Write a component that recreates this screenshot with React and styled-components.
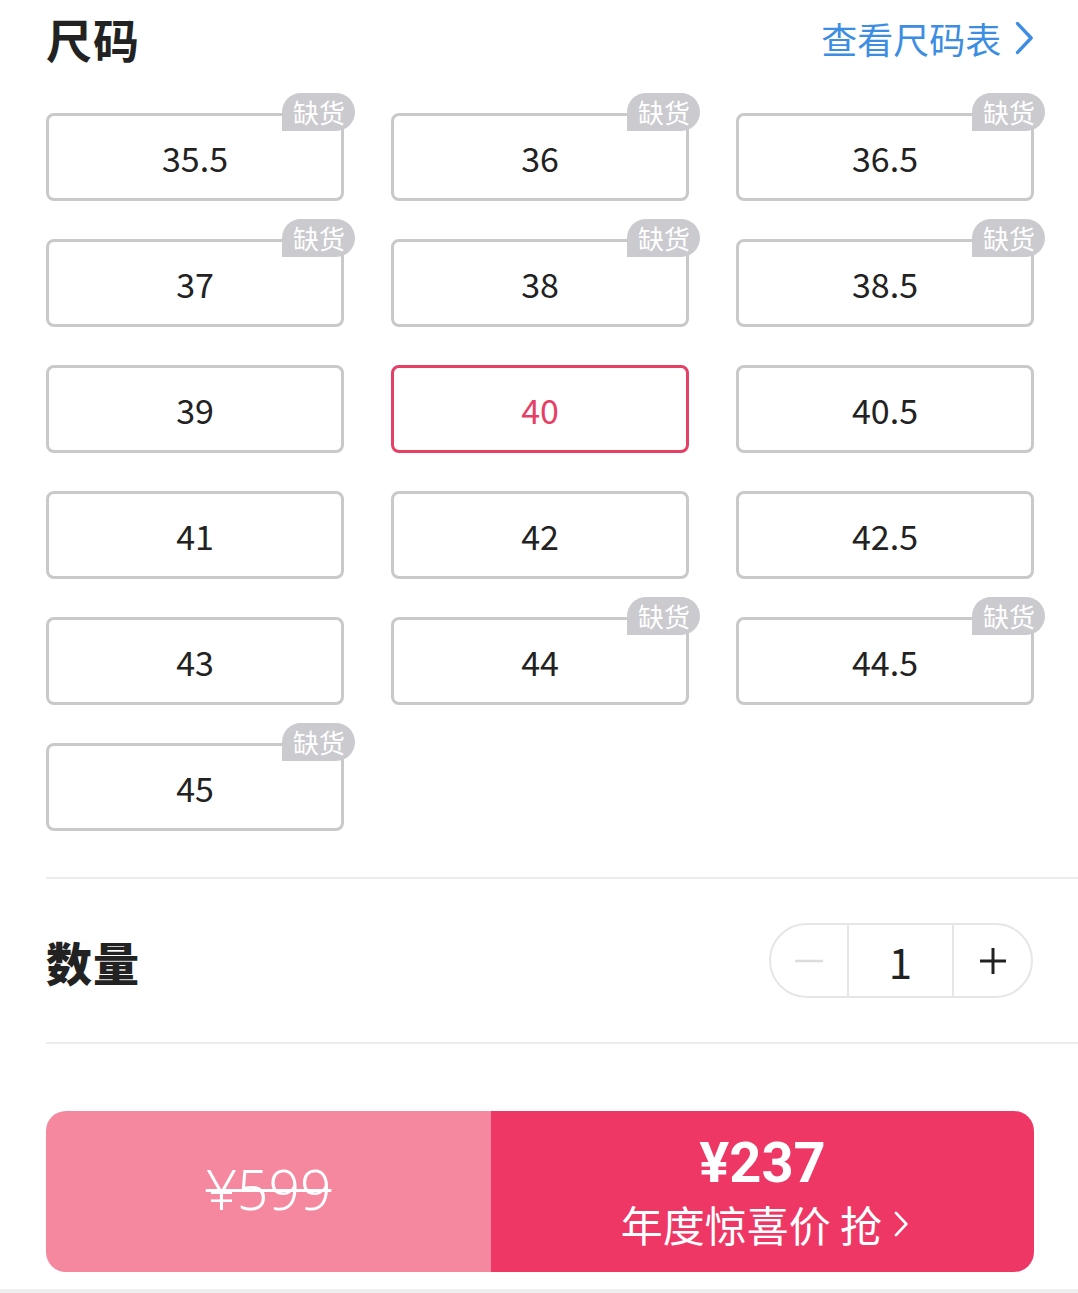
import React from "react";
import styled, { createGlobalStyle } from "styled-components";

const Global = createGlobalStyle`
  html, body { margin: 0; padding: 0; background: #fff; }
  body { font-family: "Noto Sans CJK SC", "Noto Sans", sans-serif; color: #222; }
  * { box-sizing: border-box; }
`;

const Page = styled.div`
  width: 1078px;
  height: 1293px;
  padding-left: 46px;
  display: flex;
  flex-direction: column;
  background: #fff;
  position: relative;
  overflow: hidden;
`;

const Header = styled.div`
  display: flex;
  align-items: center;
  justify-content: space-between;
  padding-right: 44px;
  padding-bottom: 6px;
  height: 82px;
`;

const Title = styled.h2`
  margin: 0;
  font-size: 46px;
  font-weight: ${(p) => (p.$heavy ? 900 : 700)};
  color: #222;
  line-height: 1;
  letter-spacing: 1px;
`;

const ChartLink = styled.a`
  display: flex;
  align-items: center;
  gap: 14px;
  font-size: 36px;
  color: #3d8ee2;
  line-height: 1;
  text-decoration: none;
`;

const Grid = styled.div`
  display: grid;
  grid-template-columns: repeat(3, 298px);
  column-gap: 47px;
  row-gap: 38px;
  margin-top: 31px;
  padding-bottom: 46px;
  border-bottom: 2px solid #ececec;
`;

const SizeCell = styled.div`
  position: relative;
  height: 88px;
  border: 3px solid ${(p) => (p.$active ? "#e63f66" : "#c9c9c9")};
  border-radius: 8px;
  display: flex;
  align-items: center;
  justify-content: center;
  font-size: 34px;
  color: ${(p) => (p.$active ? "#e63f66" : "#222")};
  background: #fff;
`;

const Badge = styled.span`
  position: absolute;
  top: -23px;
  right: -14px;
  height: 38px;
  padding: 0 10px 0 11px;
  background: #cacacf;
  color: #fff;
  font-size: 26px;
  line-height: 38px;
  border-radius: 19px 19px 19px 0;
  letter-spacing: 0;
`;

const QtyRow = styled.div`
  display: flex;
  align-items: center;
  justify-content: space-between;
  padding: 44px 44px 44px 0;
  border-bottom: 2px solid #ececec;
`;

const Stepper = styled.div`
  display: flex;
  height: 75px;
  margin-right: 1px;
  border: 2px solid #e6e6e6;
  border-radius: 38px;
  overflow: hidden;
`;

const StepBtn = styled.div`
  width: ${(p) => p.$w}px;
  display: flex;
  align-items: center;
  justify-content: center;
  border-left: ${(p) => (p.$divided ? "2px solid #e6e6e6" : "none")};
  border-right: ${(p) => (p.$dividedRight ? "2px solid #e6e6e6" : "none")};
  font-size: 42px;
  color: #222;
`;

const BuyBar = styled.div`
  margin-top: 67px;
  width: 988px;
  height: 161px;
  border-radius: 20px;
  overflow: hidden;
  display: flex;
`;

const OldPrice = styled.div`
  width: 445px;
  background: #f5879f;
  display: flex;
  align-items: center;
  justify-content: center;
  color: #fff;
  font-family: "Noto Sans", "Noto Sans CJK SC", sans-serif;
  font-weight: 300;
  font-size: 55px;
  text-decoration: line-through;
  text-decoration-thickness: 3px;
  padding-bottom: 6px;
`;

const BuyNow = styled.div`
  flex: 1;
  background: #ef3766;
  display: flex;
  flex-direction: column;
  align-items: center;
  justify-content: center;
  color: #fff;
`;

const NewPrice = styled.div`
  font-family: "Roboto", "Noto Sans", sans-serif;
  font-size: 56px;
  font-weight: 700;
  line-height: 1;
  margin-top: -4px;
`;

const Slogan = styled.div`
  font-size: 42px;
  line-height: 1;
  margin-top: 12px;
  display: flex;
  align-items: center;
  gap: 12px;
  padding-left: 4px;
`;

const BottomStrip = styled.div`
  position: absolute;
  left: 0;
  right: 0;
  bottom: 0;
  height: 4px;
  background: #efefef;
`;

const Chevron = ({ size, color, stroke }) => (
  <svg width={size * 0.55} height={size} viewBox="0 0 11 20" fill="none">
    <path d="M1.5 1.5 L9.5 10 L1.5 18.5" stroke={color} strokeWidth={stroke} strokeLinecap="round" strokeLinejoin="round" />
  </svg>
);

const sizes = [
  ["35.5", true], ["36", true], ["36.5", true],
  ["37", true], ["38", true], ["38.5", true],
  ["39", false], ["40", false, true], ["40.5", false],
  ["41", false], ["42", false], ["42.5", false],
  ["43", false], ["44", true], ["44.5", true],
  ["45", true],
];

export default function App() {
  return (
    <>
      <Global />
      <Page>
        <Header>
          <Title>尺码</Title>
          <ChartLink>
            查看尺码表
            <Chevron size={34} color="#3d8ee2" stroke={2} />
          </ChartLink>
        </Header>
        <Grid>
          {sizes.map(([s, out, active]) => (
            <SizeCell key={s} $active={active}>
              {s}
              {out && <Badge>缺货</Badge>}
            </SizeCell>
          ))}
        </Grid>
        <QtyRow>
          <Title $heavy>数量</Title>
          <Stepper>
            <StepBtn $w={76}>
              <svg width="28" height="4" viewBox="0 0 28 4"><rect width="28" height="2.5" y="0.75" fill="#dcdcdc" /></svg>
            </StepBtn>
            <StepBtn $w={107} $divided $dividedRight>1</StepBtn>
            <StepBtn $w={77}>
              <svg width="28" height="28" viewBox="0 0 28 28"><path d="M14 1V27M1 14H27" stroke="#222" strokeWidth="3" /></svg>
            </StepBtn>
          </Stepper>
        </QtyRow>
        <BuyBar>
          <OldPrice>¥599</OldPrice>
          <BuyNow>
            <NewPrice>¥237</NewPrice>
            <Slogan>
              年度惊喜价 抢
              <Chevron size={26} color="#fff" stroke={2} />
            </Slogan>
          </BuyNow>
        </BuyBar>
        <BottomStrip />
      </Page>
    </>
  );
}
